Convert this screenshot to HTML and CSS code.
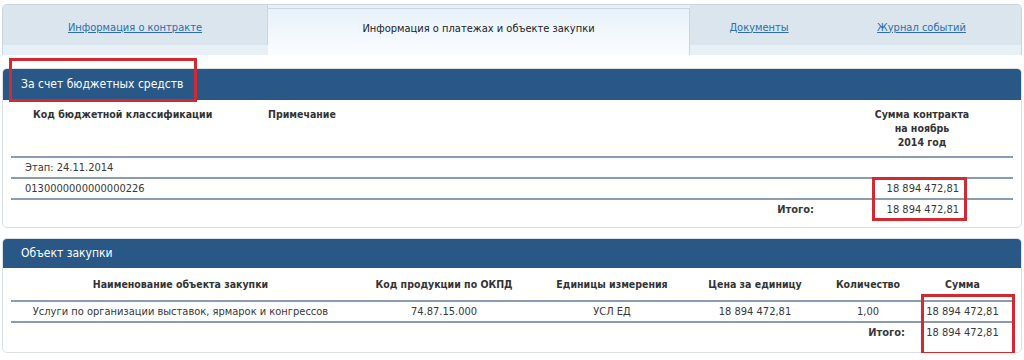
FILE: index.html
```html
<!DOCTYPE html>
<html lang="ru">
<head>
    <meta charset="UTF-8">
    <title>Информация о платежах и объекте закупки</title>
    <link rel="stylesheet" href="styles.css">
</head>
<body>
    <div class="page">
        <div class="tabs">
            <div class="tab tab-first"><a href="#">Информация о контракте</a></div>
            <div class="tab tab-active">Информация о платежах и объекте закупки</div>
            <div class="tab tab-docs"><a href="#">Документы</a></div>
            <div class="tab tab-log"><a href="#">Журнал событий</a></div>
        </div>

        <div class="panel panel-budget">
            <div class="panel-title">За счет бюджетных средств</div>
            <table class="grid budget">
                <colgroup>
                    <col style="width:247px">
                    <col>
                    <col style="width:100px">
                    <col style="width:41px">
                </colgroup>
                <tr class="head">
                    <th class="kbk">Код бюджетной классификации</th>
                    <th class="note">Примечание</th>
                    <th class="center">Сумма контракта<br>на ноябрь<br>2014 год</th>
                    <th></th>
                </tr>
                <tr class="line">
                    <td class="first" colspan="4">Этап: 24.11.2014</td>
                </tr>
                <tr class="line">
                    <td class="first" colspan="2">0130000000000000226</td>
                    <td class="money">18 894 472,81</td>
                    <td></td>
                </tr>
                <tr class="total">
                    <td></td>
                    <td class="total-label">Итого:</td>
                    <td class="money">18 894 472,81</td>
                    <td></td>
                </tr>
            </table>
        </div>

        <div class="panel panel-object">
            <div class="panel-title">Объект закупки</div>
            <table class="grid object">
                <colgroup>
                    <col style="width:339px">
                    <col style="width:188px">
                    <col style="width:148px">
                    <col style="width:138px">
                    <col style="width:88px">
                    <col>
                </colgroup>
                <tr class="head line">
                    <th>Наименование объекта закупки</th>
                    <th>Код продукции по ОКПД</th>
                    <th>Единицы измерения</th>
                    <th>Цена за единицу</th>
                    <th>Количество</th>
                    <th>Сумма</th>
                </tr>
                <tr class="line">
                    <td>Услуги по организации выставок, ярмарок и конгрессов</td>
                    <td>74.87.15.000</td>
                    <td>УСЛ ЕД</td>
                    <td>18 894 472,81</td>
                    <td>1,00</td>
                    <td>18 894 472,81</td>
                </tr>
                <tr class="total">
                    <td colspan="4"></td>
                    <td class="total-label">Итого:</td>
                    <td>18 894 472,81</td>
                </tr>
            </table>
        </div>

        <!-- red annotation frames -->
        <div class="mark mark-title"></div>
        <div class="mark mark-sum"></div>
        <div class="mark mark-sum2"></div>
    </div>
</body>
</html>
```

FILE: styles.css
```css
body {
    margin: 0;
    background: #fff;
    font-family: "DejaVu Sans Condensed", "DejaVu Sans", Verdana, sans-serif;
    font-size: 11px;
    color: #383838;
}
.page {
    position: relative;
    padding: 4px 2px 0 2px;
}

/* tabs */
.tabs {
    display: flex;
    height: 51px;
    box-sizing: border-box;
    background: #e8f0f7;
    border: 1px solid #c9d5df;
    border-bottom: none;
    border-radius: 5px 5px 0 0;
    overflow: hidden;
}
.tab {
    height: 40px;
    padding-top: 4px;
    display: flex;
    align-items: center;
    justify-content: center;
    background: #dae5ee;
    box-sizing: border-box;
}
.tab a {
    color: #2f6cad;
    text-decoration: underline;
}
.tab-first {
    width: 265px;
    border-right: 1px solid #c9d5df;
}
.tab-active {
    width: 422px;
    height: 47px;
    margin-top: 3px;
    padding-top: 0;
    padding-bottom: 8px;
    background: linear-gradient(#e7f1fa, #fbfdff);
    border-top: 1px solid #c9d5df;
    border-right: 1px solid #c9d5df;
    color: #222;
}
.tab-docs {
    width: 138px;
}
.tab-log {
    flex: 1;
    padding-right: 6px;
}

/* panels */
.panel {
    border: 1px solid #d8e0e6;
    border-radius: 5px;
    overflow: hidden;
}
.panel-budget {
    margin-top: 13px;
    height: 160px;
    box-sizing: border-box;
}
.panel-object {
    margin-top: 10px;
    height: 115px;
    box-sizing: border-box;
}
.panel-title {
    background: #2a5886;
    color: #fff;
    font-size: 12px;
    height: 31px;
    line-height: 31px;
    padding-left: 18px;
}
.panel-object .panel-title {
    height: 29px;
    line-height: 29px;
}

/* tables */
.grid {
    width: 1002px;
    margin: 0 8px;
    border-collapse: collapse;
    table-layout: fixed;
}
.grid th {
    font-weight: bold;
    font-size: 10.5px;
    line-height: 14px;
    white-space: nowrap;
    color: #333;
}
.grid td {
    height: 18px;
    padding: 1px 0 0 0;
    line-height: 18px;
    white-space: nowrap;
}
.grid .line td,
.grid .line th {
    border-bottom: 2px solid #8a9caf;
}
.budget .head th {
    height: 57px;
    box-sizing: border-box;
    vertical-align: top;
    padding: 7px 0 0 0;
    text-align: left;
    border-bottom: 2px solid #8a9caf;
}
.budget .head .kbk {
    padding-left: 22px;
}
.budget .head .note {
    padding-left: 10px;
}
.budget .head .center {
    text-align: center;
}
.budget .first {
    padding-left: 14px;
}
.budget .money {
    text-align: right;
    padding-right: 13px;
}
.budget .total-label {
    text-align: right;
    padding-right: 58px;
    font-weight: bold;
}
.object th {
    height: 32px;
    padding: 0;
    text-align: center;
}
.object td {
    text-align: center;
}
.object .total-label {
    text-align: right;
    padding-right: 7px;
    font-weight: bold;
}

/* annotation frames */
.mark {
    position: absolute;
    border: 3px solid #d22a30;
    box-sizing: border-box;
}
.mark-title {
    left: 9px;
    top: 58px;
    width: 188px;
    height: 44px;
}
.mark-sum {
    left: 872px;
    top: 177px;
    width: 95px;
    height: 44px;
}
.mark-sum2 {
    left: 921px;
    top: 294px;
    width: 94px;
    height: 61px;
}
```
